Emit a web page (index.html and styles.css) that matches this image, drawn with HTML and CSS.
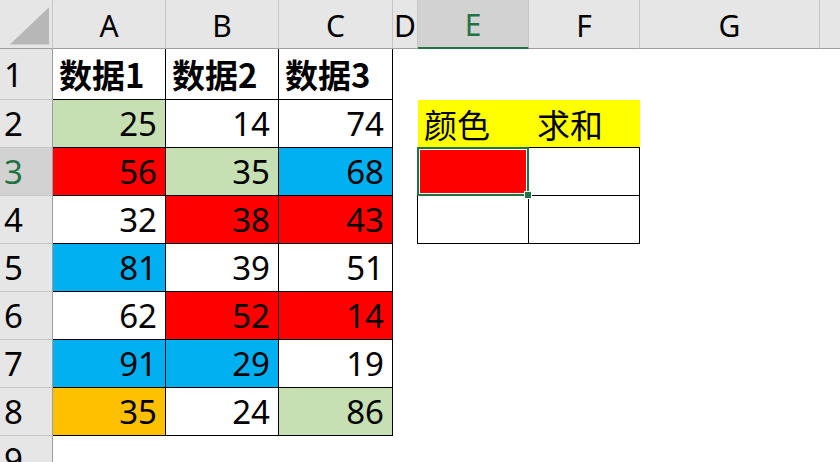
FILE: index.html
```html
<!DOCTYPE html>
<html lang="zh">
<head>
<meta charset="utf-8">
<title>Sheet</title>
<link rel="stylesheet" href="styles.css">
</head>
<body>
<div class="sheet">
  <!-- header row -->
  <div class="corner"><svg class="tri" width="53" height="49" viewBox="0 0 53 49"><polygon points="10,45 50,45 50,7" fill="#b7b7b7"/></svg></div>
  <div class="ch">A</div>
  <div class="ch">B</div>
  <div class="ch">C</div>
  <div class="ch">D</div>
  <div class="ch sel">E</div>
  <div class="ch">F</div>
  <div class="ch">G</div>
  <div class="ch last"></div>

  <!-- row 1 -->
  <div class="rh">1</div>
  <div class="c t b cjk">数据1</div>
  <div class="c t b cjk">数据2</div>
  <div class="c t b cjk">数据3</div>
  <div class="c"></div><div class="c"></div><div class="c"></div><div class="c"></div><div class="c"></div>

  <!-- row 2 -->
  <div class="rh">2</div>
  <div class="c t n green">25</div>
  <div class="c t n">14</div>
  <div class="c t n">74</div>
  <div class="c"></div>
  <div class="c yl cjk">颜色</div>
  <div class="c yl cjk">求和</div>
  <div class="c"></div><div class="c"></div>

  <!-- row 3 -->
  <div class="rh sel">3</div>
  <div class="c t n red">56</div>
  <div class="c t n green">35</div>
  <div class="c t n blue">68</div>
  <div class="c edge"></div>
  <div class="c t red active"><span class="selbox"></span><span class="handle"></span></div>
  <div class="c t"></div>
  <div class="c"></div><div class="c"></div>

  <!-- row 4 -->
  <div class="rh">4</div>
  <div class="c t n">32</div>
  <div class="c t n red">38</div>
  <div class="c t n red">43</div>
  <div class="c edge"></div>
  <div class="c t"></div>
  <div class="c t"></div>
  <div class="c"></div><div class="c"></div>

  <!-- row 5 -->
  <div class="rh">5</div>
  <div class="c t n blue">81</div>
  <div class="c t n">39</div>
  <div class="c t n">51</div>
  <div class="c"></div><div class="c"></div><div class="c"></div><div class="c"></div><div class="c"></div>

  <!-- row 6 -->
  <div class="rh">6</div>
  <div class="c t n">62</div>
  <div class="c t n red">52</div>
  <div class="c t n red">14</div>
  <div class="c"></div><div class="c"></div><div class="c"></div><div class="c"></div><div class="c"></div>

  <!-- row 7 -->
  <div class="rh">7</div>
  <div class="c t n blue">91</div>
  <div class="c t n blue">29</div>
  <div class="c t n">19</div>
  <div class="c"></div><div class="c"></div><div class="c"></div><div class="c"></div><div class="c"></div>

  <!-- row 8 -->
  <div class="rh">8</div>
  <div class="c t n orange">35</div>
  <div class="c t n">24</div>
  <div class="c t n green">86</div>
  <div class="c"></div><div class="c"></div><div class="c"></div><div class="c"></div><div class="c"></div>

  <!-- row 9 -->
  <div class="rh">9</div>
  <div class="c"></div><div class="c"></div><div class="c"></div><div class="c"></div><div class="c"></div><div class="c"></div><div class="c"></div><div class="c"></div>
</div>
</body>
</html>
```

FILE: styles.css
```css
html, body {
  margin: 0;
  padding: 0;
  background: #ffffff;
  overflow: hidden;
}

.sheet {
  width: 840px;
  height: 462px;
  overflow: hidden;
  display: grid;
  grid-template-columns: 53px 113px 113px 114px 25px 111px 111px 180px 20px;
  grid-template-rows: 49px 51px 48px 48px 48px 48px 48px 48px 48px 48px;
  font-family: "Noto Sans", "Noto Sans CJK SC", sans-serif;
  color: #000;
}

.sheet > div {
  box-sizing: border-box;
  min-width: 0;
  display: flex;
  align-items: center;
  white-space: nowrap;
}

.corner {
  background: #e6e6e6;
  border-right: 1px solid #c6c6c6;
  border-bottom: 1px solid #9e9e9e;
}
.tri { display: block; }

.ch {
  background: #e6e6e6;
  border-right: 1px solid #c6c6c6;
  border-bottom: 1px solid #9e9e9e;
  justify-content: center;
  font-size: 30px;
  padding-top: 2px;
  overflow: visible;
}
.ch.sel {
  background: #d2d2d2;
  color: #217346;
  border-bottom: 2px solid #217346;
}
.ch.last { border-right: none; }

.rh {
  background: #e6e6e6;
  border-right: 1px solid #9e9e9e;
  border-bottom: 1px solid #c6c6c6;
  font-size: 33px;
  padding-left: 4px;
}
.rh.sel {
  background: #d2d2d2;
  color: #217346;
}

.c {
  font-size: 33px;
}
.c.t {
  border-right: 1px solid #000;
  border-bottom: 1px solid #000;
}
.c.edge {
  border-right: 1px solid #000;
}
.c.n {
  justify-content: flex-end;
  padding-right: 8px;
}
.c.b {
  font-weight: bold;
  padding-left: 6px;
}
.cjk {
  font-family: "Noto Sans CJK SC", sans-serif;
}
.c.yl {
  background: #ffff00;
  border-bottom: 1px solid #000;
  padding-left: 6px;
}
.c.yl + .c.yl { padding-left: 8px; }

.green { background: #c6e0b4; }
.red { background: #ff0000; }
.blue { background: #00b0f0; }
.orange { background: #ffc000; }

.active {
  position: relative;
}
.selbox {
  position: absolute;
  left: -1px;
  top: -1px;
  right: -1px;
  bottom: -1px;
  border: 2px solid #217346;
  box-shadow: inset 0 0 0 1px #ffffff;
}
.handle {
  position: absolute;
  right: -4px;
  bottom: -4px;
  width: 6px;
  height: 6px;
  background: #217346;
  border: 1px solid #ffffff;
}
```
